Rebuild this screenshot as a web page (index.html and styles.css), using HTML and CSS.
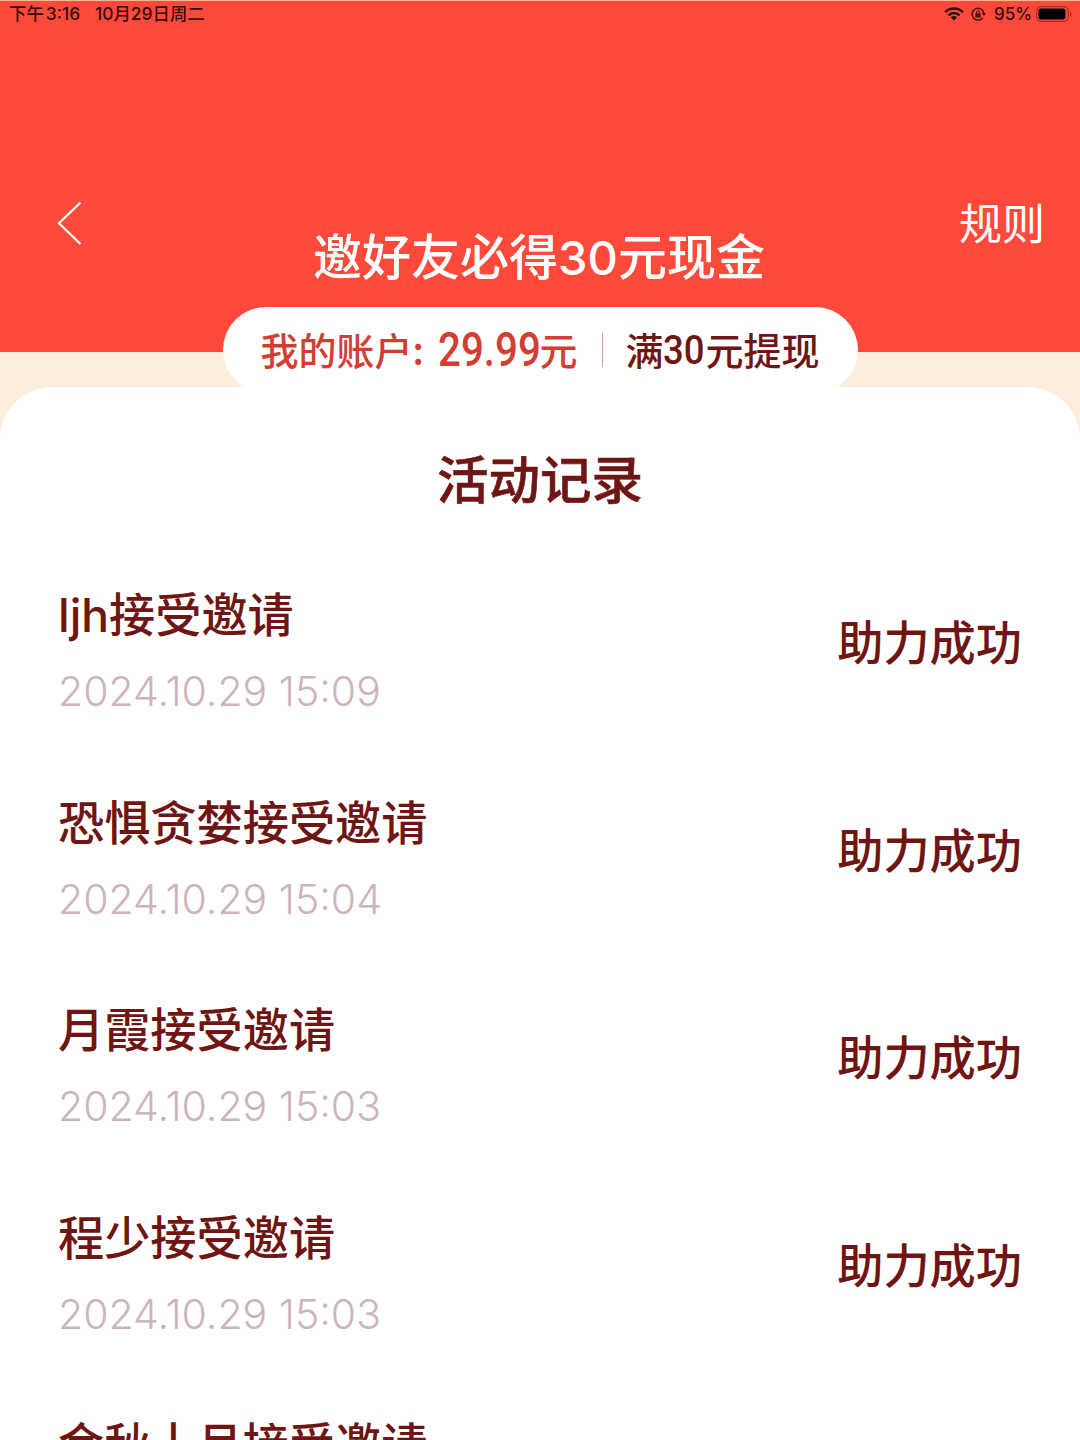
FILE: index.html
```html
<!DOCTYPE html>
<html lang="zh-CN">
<head>
    <meta charset="UTF-8">
    <title>活动记录</title>
    <link rel="stylesheet" href="styles.css">
</head>
<body>
    <header class="header">
        <div class="status-bar">
            <span class="time">下午<span class="clock">3:16</span></span>
            <span class="date">10月29日周二</span>
            <svg class="wifi" width="20" height="14" viewBox="0 0 20 14" fill="none" stroke="#300b08" stroke-width="2.5">
                <path d="M1.2 5.1a12.6 12.6 0 0 1 17.6 0M4.4 8.4a8 8 0 0 1 11.2 0"/>
                <path d="M10 13.5L6.9 10.4a4.4 4.4 0 0 1 6.2 0z" fill="#300b08" stroke="none"/>
            </svg>
            <svg class="lock" width="16" height="14" viewBox="0 0 16 14" fill="none" stroke="#4a0f0b" stroke-width="1.5">
                <path d="M11.8 10.7A5.9 5.9 0 1 1 12.8 6"/>
                <path d="M10.6 6h4.6l-2.3 3z" fill="#4a0f0b" stroke="none"/>
                <path d="M4.4 6.3h5.2v4.2H4.4z" fill="#4a0f0b" stroke="none"/>
                <path d="M5.7 6.5V5a1.3 1.3 0 0 1 2.6 0v1.5" stroke-width="1"/>
            </svg>
            <span class="percent">95%</span>
            <svg class="battery" width="37" height="16" viewBox="0 0 37 16">
                <rect x=".6" y=".6" width="31.8" height="14.8" rx="4.4" fill="none" stroke="#a92c23" stroke-width="1.2"/>
                <rect x="2.4" y="2.4" width="27" height="11.2" rx="2.5" fill="#000"/>
                <path d="M34 5.5c2 .6 2 4.400 0 5z" fill="#a92c23"/>
            </svg>
        </div>
        <nav class="nav">
            <svg class="back" width="26" height="46" viewBox="0 0 26 46" fill="none" stroke="#fff" stroke-width="2.2">
                <path d="M23.500 2.500L2 23.200L23.500 44"/>
            </svg>
            <h1>邀好友必得<span class="num">30</span>元现金</h1>
            <a class="rules">规则</a>
        </nav>
    </header>

    <div class="account">
        <span class="balance">我的账户<span class="colon">:</span><span class="amount"><b>29.99</b></span>元</span>
        <span class="divider"></span>
        <span class="withdraw">满<span class="limit"><b>30</b></span>元提现</span>
    </div>

    <main class="card">
        <h2>活动记录</h2>
        <ul class="records">
            <li>
                <div>
                    <p class="name"><span class="latin">ljh</span>接受邀请</p>
                    <p class="when">2024.10.29 15:09</p>
                </div>
                <span class="result">助力成功</span>
            </li>
            <li>
                <div>
                    <p class="name">恐惧贪婪接受邀请</p>
                    <p class="when">2024.10.29 15:04</p>
                </div>
                <span class="result">助力成功</span>
            </li>
            <li>
                <div>
                    <p class="name">月霞接受邀请</p>
                    <p class="when">2024.10.29 15:03</p>
                </div>
                <span class="result">助力成功</span>
            </li>
            <li>
                <div>
                    <p class="name">程少接受邀请</p>
                    <p class="when">2024.10.29 15:03</p>
                </div>
                <span class="result">助力成功</span>
            </li>
            <li>
                <div>
                    <p class="name">金秋十月接受邀请</p>
                </div>
            </li>
        </ul>
    </main>
</body>
</html>
```
FILE: styles.css
```css
* {
    box-sizing: border-box;
    margin: 0;
    padding: 0;
}
body {
    height: 1440px;
    overflow: hidden;
    background-color: #fdeddc;
    font-family: "Noto Sans CJK SC", sans-serif;
    font-weight: 500;
    color: #6f1614;
}
.header {
    height: 352px;
    background-color: #ff4a3b;
    border-top: 1px solid #f5b597;
}
.status-bar {
    display: flex;
    align-items: center;
    height: 26px;
    padding: 0 7px 0 9px;
    font-family: Inter, "Noto Sans CJK SC", sans-serif;
    font-size: 17.4px;
    line-height: 26px;
    color: #300b08;
    white-space: nowrap;
}
.time {
    width: 86px;
}
.clock {
    margin-left: 2px;
}
.wifi {
    margin-left: auto;
    margin-right: 7px;
}
.lock {
    margin-right: 7px;
}
.percent {
    width: 42px;
    font-size: 17px;
}
.nav {
    display: flex;
    justify-content: space-between;
    height: 120px;
    margin-top: 150px;
    padding: 0 35px 0 57px;
    color: #fff;
}
.back {
    margin-top: 23px;
}
.nav h1 {
    margin: 41px 0 0 36px;
    font-size: 49px;
    font-weight: 500;
    line-height: 72px;
    white-space: nowrap;
}
.num {
    font-family: Inter, sans-serif;
    font-size: 47px;
    line-height: 1;
}
.rules {
    margin-top: 13px;
    font-size: 43px;
    font-weight: 400;
    line-height: 62px;
}
.account {
    position: relative;
    z-index: 1;
    display: flex;
    align-items: center;
    width: 635px;
    height: 86px;
    margin: -45px auto 0;
    padding: 0 38px;
    border-radius: 43px;
    background-color: #fff;
    font-size: 38px;
    white-space: nowrap;
}
.balance,
.withdraw {
    display: flex;
    align-items: center;
    line-height: 56px;
    padding-bottom: 2px;
}
.balance {
    width: 318px;
    color: #d43d32;
}
.colon {
    width: 25px;
}
/* condensed digits */
.amount b,
.limit b {
    display: block;
    padding-top: 2px;
    font-family: Roboto, sans-serif;
    font-weight: 500;
    transform-origin: left center;
}
.amount {
    width: 102px;
}
.amount b {
    font-size: 48px;
    transform: scaleX(.84);
}
.limit {
    width: 42px;
}
.limit b {
    font-size: 41px;
    transform: scaleX(.89);
}
.divider {
    width: 1px;
    height: 34px;
    margin: 0 23px 0 24px;
    background-color: #d79a98;
}
.card {
    height: 1059px;
    margin-top: -6px;
    padding: 50px 58px 0;
    border-radius: 52px 52px 0 0;
    background-color: #fff;
    overflow: hidden;
}
.card h2 {
    font-size: 51.500px;
    font-weight: 500;
    line-height: 80px;
    text-align: center;
    -webkit-text-stroke: .6px #6f1614;
}
.records {
    margin-top: 61px;
    list-style: none;
}
.records li {
    display: flex;
    justify-content: space-between;
    height: 207.5px;
}
.name,
.result {
    height: 68px;
    font-size: 46.2px;
    line-height: 68px;
    white-space: nowrap;
}
.latin {
    font-family: Inter, sans-serif;
    line-height: 1;
}
.when {
    margin-top: 15px;
    font-family: Inter, sans-serif;
    font-size: 41px;
    font-weight: 300;
    line-height: 60px;
    color: #ceb3bc;
}
.result {
    margin-top: 28px;
}
```
